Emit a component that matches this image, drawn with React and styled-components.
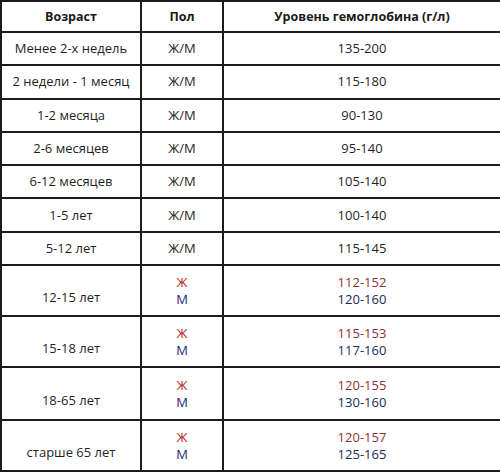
import React from "react";
import styled, { createGlobalStyle } from "styled-components";

const GlobalStyle = createGlobalStyle`
  html, body {
    margin: 0;
    padding: 0;
    background: #ffffff;
  }
  body {
    font-family: "Open Sans", "Liberation Sans", sans-serif;
  }
`;

const Table = styled.table`
  width: 500px;
  border-collapse: collapse;
  table-layout: fixed;
  color: #1f1f1f;
  font-size: 13px;
`;

const HeadCell = styled.th`
  height: 29px;
  border: 2px solid #1c1c1c;
  font-size: 12.5px;
  font-weight: 700;
  text-align: center;
  vertical-align: middle;
  padding: 0;
  color: #1a1a1a;
`;

const Row = styled.tr`
  height: ${(props) => props.$h || 33.3}px;
`;

const Cell = styled.td`
  border: 2px solid #1c1c1c;
  text-align: center;
  vertical-align: middle;
  padding: ${(props) => (props.$low ? "14px 0 0" : "0")};
  line-height: 17px;
`;

const Sex = styled.div`
  color: ${(props) => (props.$f ? "#b42a2a" : "#26267e")};
`;

const Value = styled.div`
  color: ${(props) => (props.$f ? "#8e3030" : "#202a5c")};
`;

const single = [
  ["Менее 2-х недель", "135-200"],
  ["2 недели - 1 месяц", "115-180"],
  ["1-2 месяца", "90-130"],
  ["2-6 месяцев", "95-140"],
  ["6-12 месяцев", "105-140"],
  ["1-5 лет", "100-140"],
  ["5-12 лет", "115-145"],
];

const split = [
  ["12-15 лет", "112-152", "120-160", 51],
  ["15-18 лет", "115-153", "117-160", 51],
  ["18-65 лет", "120-155", "130-160", 53],
  ["старше 65 лет", "120-157", "125-165", 51],
];

export default function App() {
  return (
    <>
      <GlobalStyle />
      <Table>
        <colgroup>
          <col style={{ width: 140 }} />
          <col style={{ width: 82 }} />
          <col style={{ width: 278 }} />
        </colgroup>
        <thead>
          <tr>
            <HeadCell>Возраст</HeadCell>
            <HeadCell>Пол</HeadCell>
            <HeadCell>Уровень гемоглобина (г/л)</HeadCell>
          </tr>
        </thead>
        <tbody>
          {single.map(([age, value]) => (
            <Row key={age}>
              <Cell>{age}</Cell>
              <Cell>Ж/М</Cell>
              <Cell>{value}</Cell>
            </Row>
          ))}
          {split.map(([age, f, m, h]) => (
            <Row key={age} $h={h}>
              <Cell $low>{age}</Cell>
              <Cell>
                <Sex $f>Ж</Sex>
                <Sex>М</Sex>
              </Cell>
              <Cell>
                <Value $f>{f}</Value>
                <Value>{m}</Value>
              </Cell>
            </Row>
          ))}
        </tbody>
      </Table>
    </>
  );
}
